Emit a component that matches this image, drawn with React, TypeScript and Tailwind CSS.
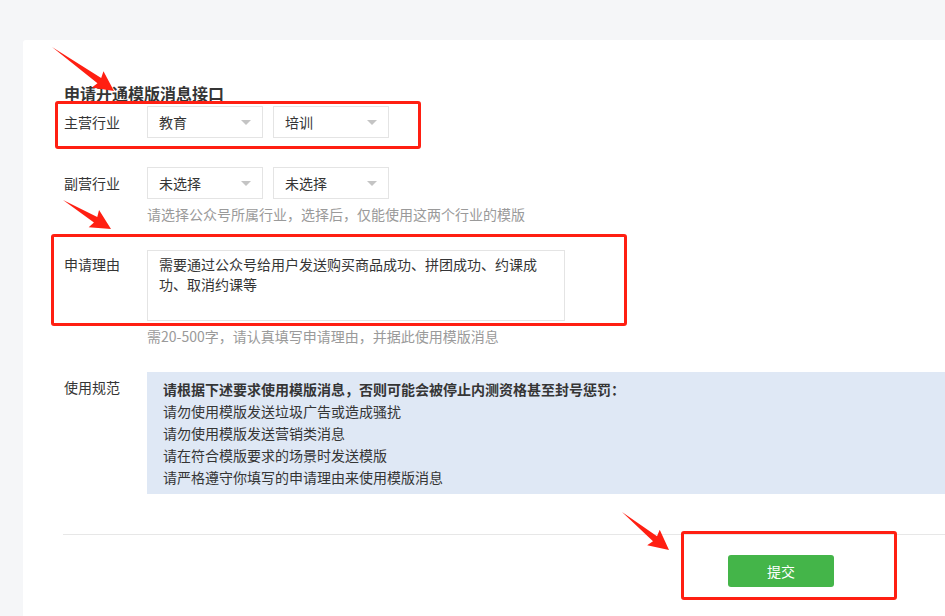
const font = { fontFamily: '"Noto Sans CJK SC", "Noto Sans", sans-serif' };

const Select = ({ value }: { value: string }) => (
  <div className="w-[116px] h-[32px] border border-[#e4e4e4] bg-white flex items-center justify-between pl-[11px] pr-[11px] text-[14px] text-[#353535]">
    <span>{value}</span>
    <span className="w-0 h-0 border-l-[5px] border-r-[5px] border-t-[5px] border-l-transparent border-r-transparent border-t-[#c4c4c4]" />
  </div>
);

const Arrow = ({
  tail,
  tip,
}: {
  tail: [number, number];
  tip: [number, number];
}) => {
  const dx = tip[0] - tail[0];
  const dy = tip[1] - tail[1];
  const L = Math.sqrt(dx * dx + dy * dy);
  const ux = dx / L;
  const uy = dy / L;
  const nx = -uy;
  const ny = ux;
  const pt = (a: number, b: number) =>
    `${tail[0] + ux * a + nx * b},${tail[1] + uy * a + ny * b}`;
  const h = 18;
  const pts = [
    pt(0, 0),
    pt(L - h, -3.2),
    pt(L - h - 2, -10),
    pt(L, 0),
    pt(L - h - 2, 10),
    pt(L - h, 3.2),
  ].join(' ');
  return <polygon points={pts} fill="#ff1f12" />;
};

const rules = [
  '请勿使用模版发送垃圾广告或造成骚扰',
  '请勿使用模版发送营销类消息',
  '请在符合模版要求的场景时发送模版',
  '请严格遵守你填写的申请理由来使用模版消息',
];

export default function App() {
  return (
    <div
      style={font}
      className="relative w-[945px] h-[616px] overflow-hidden bg-[#f5f6f8] pt-[40px] pl-[23px]"
    >
      <div className="bg-white w-[940px] h-[600px] rounded-tl-[3px] pl-[41px] pt-[41px]">
        <div className="text-[16px] leading-[24px] font-bold text-[#353535]">
          申请开通模版消息接口
        </div>

        <div className="flex mt-[1px]">
          <div className="w-[83px] leading-[32px] text-[14px] text-[#353535]">主营行业</div>
          <div className="flex gap-[10px]">
            <Select value="教育" />
            <Select value="培训" />
          </div>
        </div>

        <div className="flex mt-[29px]">
          <div className="w-[83px] leading-[32px] text-[14px] text-[#353535]">副营行业</div>
          <div className="flex flex-col">
            <div className="flex gap-[10px]">
              <Select value="未选择" />
              <Select value="未选择" />
            </div>
            <div className="mt-[5px] text-[14px] leading-[20px] text-[#9a9a9a]">
              请选择公众号所属行业，选择后，仅能使用这两个行业的模版
            </div>
          </div>
        </div>

        <div className="flex mt-[26px]">
          <div className="w-[83px] mt-[4px] leading-[20px] text-[14px] text-[#353535]">申请理由</div>
          <div className="flex flex-col">
            <div className="w-[418px] h-[71px] border border-[#e4e4e4] pl-[11px] pr-[20px] pt-[3px] text-[14px] leading-[20px] text-[#353535]">
              需要通过公众号给用户发送购买商品成功、拼团成功、约课成功、取消约课等
            </div>
            <div className="mt-[5px] text-[14px] leading-[20px] text-[#9a9a9a]">
              需20-500字，请认真填写申请理由，并据此使用模版消息
            </div>
          </div>
        </div>

        <div className="flex mt-[26px]">
          <div className="w-[83px] mt-[5px] leading-[20px] text-[14px] text-[#353535]">使用规范</div>
          <div className="flex-1 bg-[#dfe8f5] pl-[16px] py-[6px] text-[14px] leading-[22px] text-[#353535]">
            <div className="font-bold">请根据下述要求使用模版消息，否则可能会被停止内测资格甚至封号惩罚：</div>
            {rules.map((r) => (
              <div key={r}>{r}</div>
            ))}
          </div>
        </div>

        <div className="mt-[40px] -ml-px h-px bg-[#e7e7e7]" />

        <div className="mt-[20px] ml-[664px]">
          <button className="w-[106px] h-[32px] rounded-[3px] bg-[#44b549] text-white text-[14px]">
            提交
          </button>
        </div>
      </div>

      {/* annotations */}
      <div className="absolute left-[55px] top-[101px] w-[366px] h-[48px] border-[3px] border-[#ff1f12] rounded-[3px]" />
      <div className="absolute left-[51px] top-[234px] w-[576px] h-[92px] border-[3px] border-[#ff1f12] rounded-[3px]" />
      <div className="absolute left-[681px] top-[531px] w-[216px] h-[69px] border-[3px] border-[#ff1f12] rounded-[3px]" />
      <svg className="absolute left-0 top-0" width={945} height={616}>
        <Arrow tail={[52, 47]} tip={[114, 91]} />
        <Arrow tail={[63, 200]} tip={[111, 229]} />
        <Arrow tail={[622, 512]} tip={[669, 550]} />
      </svg>
    </div>
  );
}
